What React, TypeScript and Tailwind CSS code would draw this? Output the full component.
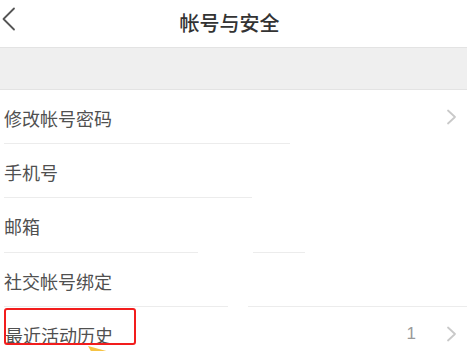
import React from "react";

const font = { fontFamily: '"Noto Sans CJK SC", "Noto Sans", sans-serif' };

function Chevron() {
  return (
    <svg width="11" height="16" viewBox="0 0 11 16" fill="none">
      <path d="M2 1.5 L9 8 L2 14.5" stroke="#c9c9c9" strokeWidth="1.8" strokeLinecap="round" strokeLinejoin="round" />
    </svg>
  );
}

type Row = { label: string; divider: React.ReactNode; extra?: string; h: string };

export default function App() {
  const rows: Row[] = [
    {
      label: "修改帐号密码",
      extra: "chev",
      h: "h-[53px]",
      divider: (
        <div className="flex h-px">
          <div className="ml-[4px] w-[286px] bg-[#ececec]" />
        </div>
      ),
    },
    {
      label: "手机号",
      h: "h-[53px]",
      divider: (
        <div className="flex h-px">
          <div className="ml-[4px] w-[248px] bg-[#ececec]" />
        </div>
      ),
    },
    {
      label: "邮箱",
      h: "h-[54px]",
      divider: (
        <div className="flex h-px">
          <div className="ml-[4px] w-[194px] bg-[#ececec]" />
          <div className="ml-[55px] w-[52px] bg-[#ececec]" />
        </div>
      ),
    },
    {
      label: "社交帐号绑定",
      h: "h-[53px]",
      divider: (
        <div className="flex h-px">
          <div className="ml-[4px] w-[224px] bg-[#ececec]" />
          <div className="ml-[20px] flex-1 bg-[#ececec]" />
        </div>
      ),
    },
  ];

  return (
    <div className="relative h-[351px] w-[467px] overflow-hidden bg-white" style={font}>
      {/* header */}
      <div className="relative flex h-[48px] items-center justify-center border-b border-[#e3e3e3]">
        <svg className="absolute left-[1px] top-[7px]" width="15" height="24" viewBox="0 0 15 24" fill="none">
          <path d="M13 1.5 L2.5 12 L13 22.5" stroke="#555" strokeWidth="1.8" strokeLinecap="round" strokeLinejoin="round" />
        </svg>
        <span className="mr-[8px] mb-[2px] text-[20px] font-medium leading-none text-[#333]">帐号与安全</span>
      </div>
      {/* grey band */}
      <div className="h-[42px] border-b border-[#e3e3e3] bg-[#efefef]" />
      {/* rows */}
      {rows.map((r) => (
        <div key={r.label}>
          <div className={`flex ${r.h} items-center justify-between pl-[4px] pr-[10px]`}>
            <span className="mt-[2px] text-[18px] leading-none text-[#505050]">{r.label}</span>
            {r.extra === "chev" && <Chevron />}
          </div>
          {r.divider}
        </div>
      ))}
      <div className="relative flex h-[53px] items-center justify-between pl-[5px] pr-[10px]">
        <span className="mt-[2px] text-[18px] leading-none text-[#505050]">最近活动历史</span>
        <div className="flex items-center gap-[30px]">
          <span className="text-[17px] leading-none text-[#9a9a9a]" style={{ fontFamily: '"Liberation Sans", sans-serif' }}>1</span>
          <Chevron />
        </div>
        {/* red highlight box */}
        <div className="absolute left-[4px] top-[1px] h-[37px] w-[132px] rounded-[3px] border-2 border-[#f21d1d]" />
      </div>
      {/* yellow pointer arrow */}
      <svg className="absolute left-[86px] top-[343px]" width="26" height="10" viewBox="0 0 26 10">
        <path d="M2 3 L24 9 L14 10 L6 10 Z" fill="#f6c343" />
      </svg>
    </div>
  );
}
